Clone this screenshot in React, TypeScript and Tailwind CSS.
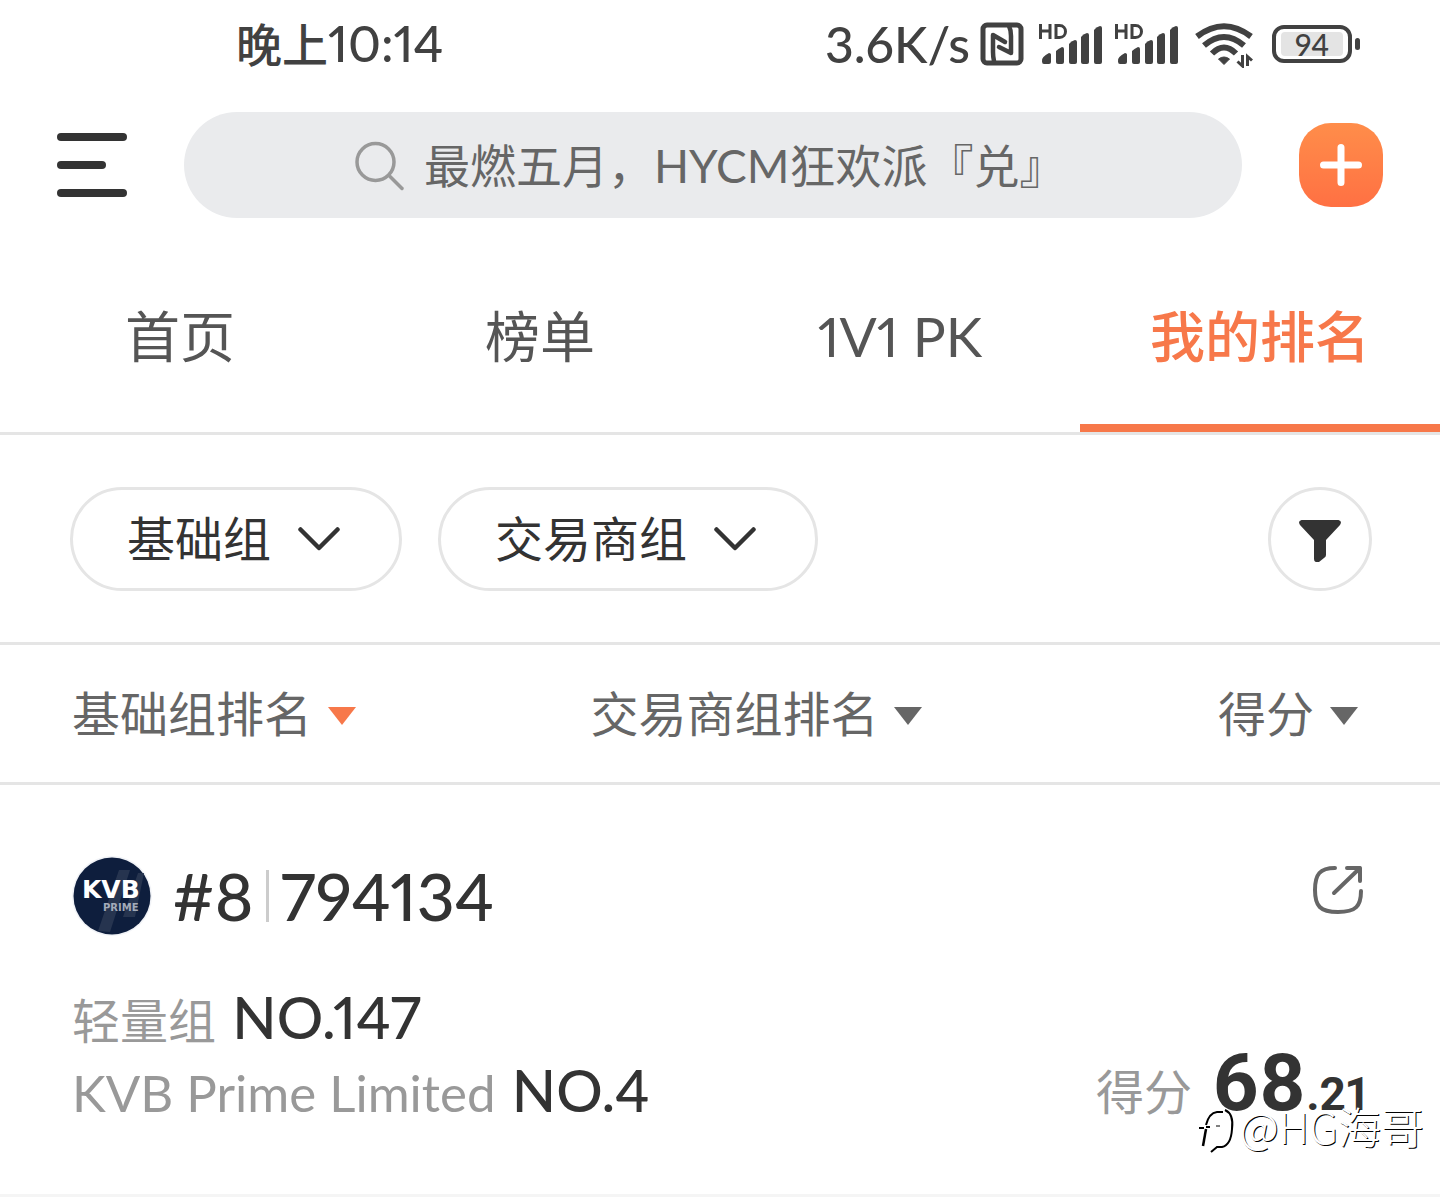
const tabs = ['首页', '榜单', '1V1 PK', '我的排名']
const groups = ['基础组', '交易商组']
const columns = [
  { name: '基础组排名', active: true },
  { name: '交易商组排名', active: false },
  { name: '得分', active: false },
]

function Signal() {
  return (
    <svg aria-hidden="true" className="w-16 h-12 shrink-0" viewBox="0 0 64 48" fill="currentColor">
      <path d="M2.500 8v15M12 8v15M2.500 15h9.500M18 9.500v12h3.500c8 0 8-12 0-12z" fill="none" stroke="currentColor" strokeWidth="3" />
      <path d="M4 45.500q-1.500-4 7-8.500q2 0 2 1.500v7.500q0 2-2 2H6q-2 0-2-2.500z" />
      <path d="M18 35q2-2 6-4q2 0 2 2v13q0 2-2 2h-4q-2 0-2-2z" />
      <path d="M31 28q2-3 6-4q2 0 2 2v20q0 2-2 2h-4q-2 0-2-2z" />
      <path d="M43 21q2-3 6-4q2 0 2 2v27q0 2-2 2h-4q-2 0-2-2z" />
      <path d="M56 14q2-3 6-4q2 0 2 2v34q0 2-2 2h-4q-2 0-2-2z" />
    </svg>
  )
}

function StatusBar() {
  return (
    <div className="flex items-center justify-between h-[88px] pl-[236px] pr-20 text-[#414141] font-medium">
      <span className="text-[46px] leading-[60px]">
        晚上<span className="text-[50px]">10:14</span>
      </span>
      <div className="flex items-center">
        <span className="text-[50px] leading-[60px]">3.6K/s</span>
        <svg aria-hidden="true" className="ml-[10px] mr-[14px] w-11 h-11" viewBox="0 0 44 44" fill="none" stroke="currentColor" strokeLinecap="round" strokeLinejoin="round">
          <rect x="3" y="3" width="38" height="38" rx="4" strokeWidth="5" />
          <path d="M14 39q-1-4-1-9V13l12 7" strokeWidth="4.500" />
          <path d="M29 4q2 4 2 10v17l-12-6" strokeWidth="4.500" />
        </svg>
        <div className="flex gap-3 pb-2">
          <Signal />
          <Signal />
        </div>
        <svg aria-hidden="true" className="ml-4 w-[60px] h-12" viewBox="0 0 60 48" fill="none" stroke="currentColor" strokeWidth="6">
          <path d="M3 16.500Q30-4 57 16.500" />
          <path d="M10 25.500Q30 8.500 50 25.500" />
          <path d="M18 33.500Q30 21.500 42 33.500" />
          <path d="M24.500 39q5.500-4 11 0l-5.500 5.500z" fill="currentColor" strokeWidth="1" />
          <path d="M48.500 35v11l-5-4.500M53.500 46V36.500l4.500 4" strokeWidth="3" />
        </svg>
        <div className="ml-[18px] flex items-center justify-center w-20 h-[38px] p-[5px] border-4 border-current rounded-xl">
          <span className="flex-1 h-6 text-center text-[30px] leading-6 bg-[#e4e4e4] rounded">94</span>
        </div>
        <span className="ml-[3px] w-[5px] h-3 bg-current rounded-full" />
      </div>
    </div>
  )
}

function TopBar() {
  return (
    <header className="flex items-center mt-6 px-[57px] h-[106px]">
      <button type="button" aria-label="菜单" className="flex flex-col justify-between w-[70px] h-16">
        <span className="w-full h-2 bg-[#333] rounded-full" />
        <span className="w-[49px] h-2 bg-[#333] rounded-full" />
        <span className="w-full h-2 bg-[#333] rounded-full" />
      </button>
      <label className="flex flex-1 items-center mx-[57px] pl-[170px] h-full bg-[#eaebed] rounded-full">
        <svg aria-hidden="true" className="w-[52px] h-[52px] shrink-0" viewBox="0 0 52 52" fill="none" stroke="#999" strokeWidth="3.500" strokeLinecap="round">
          <circle cx="21.500" cy="23" r="18.500" />
          <path d="M36 37.500l12 12" />
        </svg>
        <input type="search" aria-label="搜索" placeholder="最燃五月，HYCM狂欢派『兑』" className="ml-[18px] flex-1 min-w-0 h-16 text-[46px] bg-transparent outline-none placeholder:text-[#666]" />
      </label>
      <button type="button" aria-label="添加" className="flex items-center justify-center w-[84px] h-[84px] rounded-[32px] bg-gradient-to-b from-[#ff8d4a] to-[#ff7043]">
        <svg aria-hidden="true" className="w-11 h-11" viewBox="0 0 44 44" stroke="#fff" strokeWidth="7" strokeLinecap="round">
          <path d="M22 4.500v35M4.500 22h35" />
        </svg>
      </button>
    </header>
  )
}

function Triangle({ active }: { active: boolean }) {
  return (
    <svg aria-hidden="true" className={active ? 'mt-1 w-7 h-[18px] text-[#f7784a]' : 'mt-1 w-7 h-[18px] text-[#666]'} viewBox="0 0 28 18" fill="currentColor">
      <path d="M0 0h28L14 18z" />
    </svg>
  )
}

function KvbLogo() {
  return (
    <svg role="img" aria-label="KVB Prime" className="w-20 h-20" viewBox="0 0 80 80">
      <circle cx="40" cy="40" r="40" fill="#f1f3f7" />
      <circle cx="40" cy="40" r="38.500" fill="#0e1e3d" />
      <path d="M47 14h11L38 76l-12-1zM66 17h6L63 61H51z" fill="#26344f" />
      <text x="10" y="42" fontSize="25" fontWeight="700" fill="#fff" fontFamily="DejaVu Sans">KVB</text>
      <text x="31" y="55" fontSize="10" fontWeight="700" fill="#a3abb9" fontFamily="DejaVu Sans">PRIME</text>
    </svg>
  )
}

export default function App() {
  return (
    <div className="relative w-full overflow-hidden bg-white text-[#333] font-['Lato','Noto_Sans_CJK_SC',sans-serif] proportional-nums">
      <StatusBar />
      <TopBar />

      <nav className="grid grid-cols-4 mt-[54px] h-[163px] border-b-3 border-[#e5e5e5] text-[55px] text-[#555]">
        {tabs.map((tab) => (
          <a
            key={tab}
            href="#"
            className={
              tab === '我的排名'
                ? 'flex justify-center pt-6 leading-[80px] font-medium text-[#f7784a] border-b-8 border-[#f7784a]'
                : 'flex justify-center pt-6 leading-[80px]'
            }
          >
            {tab}
          </a>
        ))}
      </nav>

      <div className="flex items-center gap-9 h-[210px] pl-[70px] pr-[68px] border-b-3 border-[#e5e5e5]">
        {groups.map((group) => (
          <div key={group} className="relative">
            <select aria-label={group} className="appearance-none h-[104px] pl-[54px] pr-[127px] text-[48px] leading-[60px] bg-white border-3 border-[#e5e5e5] rounded-full">
              <option>{group}</option>
            </select>
            <svg aria-hidden="true" className="absolute right-[62px] top-10 w-[42px] h-6 pointer-events-none" viewBox="0 0 42 24" fill="none" stroke="#333" strokeWidth="4.500" strokeLinecap="round" strokeLinejoin="round">
              <path d="M2.500 2.500L21 21L39.500 2.500" />
            </svg>
          </div>
        ))}
        <button type="button" aria-label="筛选" className="ml-auto flex items-center justify-center w-[104px] h-[104px] border-3 border-[#e5e5e5] rounded-full">
          <svg aria-hidden="true" className="mt-1 w-[42px] h-[42px]" viewBox="0 0 42 42" fill="#333">
            <path d="M2.500 0h37q4 1 1.500 5L27 20v15q0 2-2 3l-5 4q-5 1-5-3V20L1 5q-2.500-4 1.500-5z" />
          </svg>
        </button>
      </div>

      <div className="grid grid-cols-[2fr_2fr_1fr] items-center h-[140px] px-[72px] border-b-3 border-[#e5e5e5] text-[48px] leading-[60px] text-[#666]">
        {columns.map((column) => (
          <button key={column.name} type="button" className="flex items-center gap-4 last:justify-self-end last:mr-[10px]">
            {column.name}
            <Triangle active={column.active} />
          </button>
        ))}
      </div>

      <article className="px-[72px] pt-[71px] pb-[68px] border-b-3 border-[#f5f5f5]">
        <div className="flex items-center">
          <KvbLogo />
          <h2 className="flex items-center ml-5 text-[66px] leading-[80px] font-medium">
            #8
            <span className="mx-3 w-[3px] h-[52px] bg-[#ccc]" />
            794134
          </h2>
          <a href="#" aria-label="分享" className="ml-auto mr-1 mb-3">
            <svg aria-hidden="true" className="w-[52px] h-[52px]" viewBox="0 0 52 52" fill="none" stroke="#666" strokeWidth="4" strokeLinecap="round" strokeLinejoin="round">
              <path d="M23 4C8 4 3 10 3 26s5 22 23 22 23-6 23-21" />
              <path d="M22 29L48 4M35 4h13v13" />
            </svg>
          </a>
        </div>
        <div className="flex items-end justify-between mt-11 text-[48px] text-[#999]">
          <div>
            <p className="h-[73px] leading-[73px]">
              轻量组 <b className="ml-1 text-[58px] font-medium text-[#333]">NO.147</b>
            </p>
            <p className="h-[73px] leading-[73px]">
              <span className="text-[51px]">KVB Prime Limited</span> <b className="ml-1 text-[58px] font-medium text-[#333]">NO.4</b>
            </p>
          </div>
          <p className="mb-1.5 h-[73px] leading-[73px]">
            得分
            <b className="ml-5 font-['Roboto'] text-[80px] font-bold text-[#333]">68</b>
            <b className="font-['Roboto'] text-[46px] font-bold text-[#333]">.21</b>
          </p>
        </div>
      </article>

      <div className="absolute right-4 bottom-11 flex items-center text-white">
        <svg aria-hidden="true" className="mt-2 w-[42px] h-12" viewBox="0 0 42 48" fill="none">
          <path d="M6 41l3-17" stroke="#000" strokeWidth="2.500" />
          <path d="M2 23h5M9 22h4M9 20Q12 8 20 7h6" stroke="#000" strokeWidth="2" />
          <path d="M28 5q9 4 7 19q-1 16-10 18h-5l-6 5" stroke="#000" strokeWidth="2" />
          <path d="M19 21h4" stroke="#000" strokeWidth="1" />
        </svg>
        <span className="font-['Noto_Sans_CJK_SC'] font-light text-[43px] leading-[56px] text-shadow-[1px_1px_0_#000]">@HG海哥</span>
      </div>
    </div>
  )
}
